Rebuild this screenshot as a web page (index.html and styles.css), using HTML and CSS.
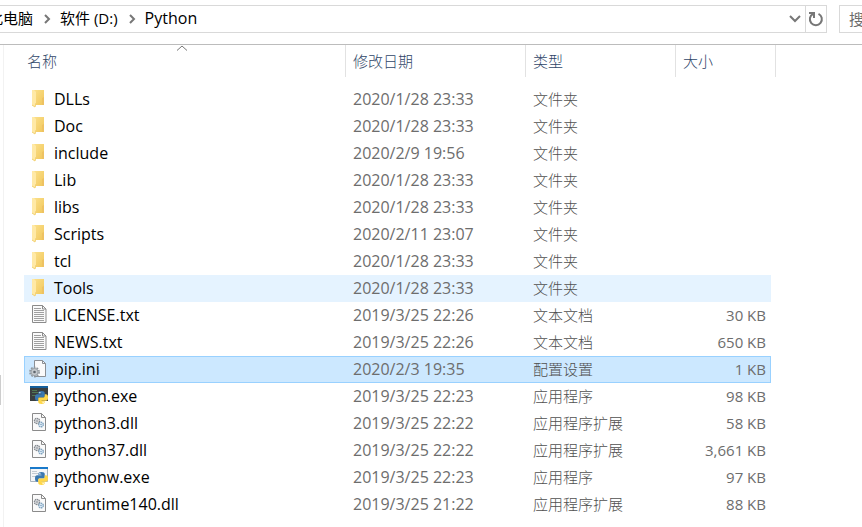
FILE: index.html
```html
<!DOCTYPE html>
<html lang="zh-CN">
<head>
  <meta charset="UTF-8" />
  <meta name="viewport" content="width=device-width, initial-scale=1.0"/>
  <title>Python</title>
  <link rel="stylesheet" href="styles.css">
</head>
<body>
  <svg class="sprite" aria-hidden="true">
    <defs>
      <linearGradient id="gold" x1="0" y1="0" x2="1" y2="1">
        <stop offset="0" stop-color="#fbe08a"/>
        <stop offset="1" stop-color="#f1c75c"/>
      </linearGradient>
    </defs>
    <symbol id="folder" viewBox="0 0 20 21">
      <path d="M6 1h10v15H6z" fill="url(#gold)"/>
      <path d="M14 9l2-1v8h-2z" fill="#eec262"/>
      <path d="M4 1h2l2 2v11l-1 4-3-2z" fill="#ffe9a6"/>
      <path d="M4 16l3 2 1-4" fill="none" stroke="#f3d173"/>
    </symbol>
    <symbol id="sheet" viewBox="0 0 20 21">
      <path d="M4.500 .5h10l3.500 3.500v13.500H4.500z" fill="#fafafa" stroke="#8b8b8b"/>
      <path d="M14.500 .5v3.500H18" fill="none" stroke="#8b8b8b"/>
    </symbol>
    <symbol id="txt" viewBox="0 0 20 21">
      <use href="#sheet"/>
      <path d="M6 3.500h7M6 5.500h10M6 7.500h10M6 9.500h10M6 11.500h10M6 13.500h10M6 15.500h10" stroke="#a0a0a0"/>
    </symbol>
    <symbol id="dll" viewBox="0 0 20 21">
      <path d="M4.500 .5h9l4 4v13h-13z" fill="#fafafa" stroke="#8b8b8b"/>
      <path d="M13.500 .5v4h4" fill="none" stroke="#8b8b8b"/>
      <circle cx="9" cy="8" r="2.500" fill="#eef0f2" stroke="#84898f" stroke-width="1.500" stroke-dasharray="1.400 .5"/>
      <circle cx="9" cy="8" r="1" fill="#9a9fa5"/>
      <circle cx="13" cy="11.500" r="2.300" fill="#e6f1fa" stroke="#7fa3bf" stroke-width="1.400" stroke-dasharray="1.400 .5"/>
      <circle cx="13" cy="11.500" r=".8" fill="#7fa3bf"/>
    </symbol>
    <symbol id="ini" viewBox="0 0 20 21">
      <path d="M6.500 1.500h8l3 3v13h-11z" fill="#fafafa" stroke="#8b8f94"/>
      <path d="M14.500 1.500v3h3" fill="none" stroke="#8b8f94"/>
      <circle cx="6.500" cy="13" r="4.600" fill="none" stroke="#8f969c" stroke-width="1.600" stroke-dasharray="1.800 1.100"/>
      <circle cx="6.500" cy="13" r="3.600" fill="#c3c8cc" stroke="#989ea3"/>
      <circle cx="6.500" cy="13" r="1.300" fill="#5f666c"/>
    </symbol>
    <symbol id="snake" viewBox="0 0 12 12">
      <path d="M3 2Q3 0 6 0t3 2v3Q9 6 8 6H4Q3 6 3 9H2Q0 9 0 6t2-3h4V2.500H3z" fill="#3a78b0"/>
      <path d="M9 10q0 2-3 2t-3-2V7q0-1 1-1h4q1 0 1-3h1q2 0 2 3t-2 3H6v.5h3z" fill="#ffd748"/>
      <circle cx="4.500" cy="1.500" r=".6" fill="#fff"/>
      <circle cx="7.500" cy="10.500" r=".6" fill="#fff"/>
    </symbol>
    <symbol id="exe" viewBox="0 0 20 21">
      <path d="M2 0h18v15H2z" fill="#3b3f40"/>
      <path d="M2 0h18v2H2z" fill="#16609d"/>
      <path d="M4 4.500h5M4 6.500h7M4 9.500h4" stroke="#4f7853"/>
      <use href="#snake" x="7" y="5" width="13" height="13"/>
    </symbol>
    <symbol id="exew" viewBox="0 0 20 21">
      <path d="M2.500 .5h17v14h-17z" fill="#f4f6f8" stroke="#a9b4bd"/>
      <path d="M2 0h18v2H2z" fill="#1979ca"/>
      <path d="M4 4.500h5M4 6.500h6M4 9.500h4" stroke="#c3cbd2"/>
      <use href="#snake" x="7" y="5" width="13" height="13"/>
    </symbol>
  </svg>

  <header class="toolbar">
    <nav class="address">
      <button class="crumb first">此电脑</button>
      <svg class="arrow" viewBox="0 0 8 10"><path d="M2 1l4 4-4 4"/></svg>
      <button class="crumb">软件 (D:)</button>
      <svg class="arrow" viewBox="0 0 8 10"><path d="M2 1l4 4-4 4"/></svg>
      <button class="crumb current">Python</button>
      <button class="tool history" aria-label="历史记录">
        <svg width="12" height="8" viewBox="0 0 12 8"><path d="M1 1l5 5 5-5"/></svg>
      </button>
      <button class="tool refresh" aria-label="刷新">
        <svg width="16" height="16" viewBox="0 0 16 16"><path d="M10.500 2.800a6 6 0 1 1-5.500 .1"/><path d="M1 2h5v5"/></svg>
      </button>
    </nav>
    <input class="search" type="text" placeholder="搜索" aria-label="搜索" />
  </header>

  <div class="content">
    <aside class="sidebar"><div class="thumb"></div></aside>
    <main class="files">
      <table>
        <colgroup>
          <col class="c-name"><col class="c-date"><col class="c-type"><col class="c-size"><col class="c-end">
        </colgroup>
        <thead>
          <tr>
            <th class="sorted">名称<svg class="sort" width="12" height="6" viewBox="0 0 12 6"><path d="M1 5.500l5-4.500 5 4.500"/></svg></th>
            <th>修改日期</th>
            <th>类型</th>
            <th colspan="2">大小</th>
          </tr>
        </thead>
        <tbody>
          <tr><td><svg class="icon"><use href="#folder"/></svg>DLLs</td><td>2020/1/28 23:33</td><td>文件夹</td><td></td></tr>
          <tr><td><svg class="icon"><use href="#folder"/></svg>Doc</td><td>2020/1/28 23:33</td><td>文件夹</td><td></td></tr>
          <tr><td><svg class="icon"><use href="#folder"/></svg>include</td><td>2020/2/9 19:56</td><td>文件夹</td><td></td></tr>
          <tr><td><svg class="icon"><use href="#folder"/></svg>Lib</td><td>2020/1/28 23:33</td><td>文件夹</td><td></td></tr>
          <tr><td><svg class="icon"><use href="#folder"/></svg>libs</td><td>2020/1/28 23:33</td><td>文件夹</td><td></td></tr>
          <tr><td><svg class="icon"><use href="#folder"/></svg>Scripts</td><td>2020/2/11 23:07</td><td>文件夹</td><td></td></tr>
          <tr><td><svg class="icon"><use href="#folder"/></svg>tcl</td><td>2020/1/28 23:33</td><td>文件夹</td><td></td></tr>
          <tr class="hover"><td><svg class="icon"><use href="#folder"/></svg>Tools</td><td>2020/1/28 23:33</td><td>文件夹</td><td></td></tr>
          <tr><td><svg class="icon"><use href="#txt"/></svg>LICENSE.txt</td><td>2019/3/25 22:26</td><td>文本文档</td><td>30 KB</td></tr>
          <tr><td><svg class="icon"><use href="#txt"/></svg>NEWS.txt</td><td>2019/3/25 22:26</td><td>文本文档</td><td>650 KB</td></tr>
          <tr class="selected"><td><svg class="icon"><use href="#ini"/></svg>pip.ini</td><td>2020/2/3 19:35</td><td>配置设置</td><td>1 KB</td></tr>
          <tr><td><svg class="icon"><use href="#exe"/></svg>python.exe</td><td>2019/3/25 22:23</td><td>应用程序</td><td>98 KB</td></tr>
          <tr><td><svg class="icon"><use href="#dll"/></svg>python3.dll</td><td>2019/3/25 22:22</td><td>应用程序扩展</td><td>58 KB</td></tr>
          <tr><td><svg class="icon"><use href="#dll"/></svg>python37.dll</td><td>2019/3/25 22:22</td><td>应用程序扩展</td><td>3,661 KB</td></tr>
          <tr><td><svg class="icon"><use href="#exew"/></svg>pythonw.exe</td><td>2019/3/25 22:23</td><td>应用程序</td><td>97 KB</td></tr>
          <tr><td><svg class="icon"><use href="#dll"/></svg>vcruntime140.dll</td><td>2019/3/25 21:22</td><td>应用程序扩展</td><td>88 KB</td></tr>
        </tbody>
      </table>
    </main>
  </div>
</body>
</html>
```

FILE: styles.css
```css
* {
  box-sizing: border-box;
}
body {
  margin: 0;
  background: #fff;
  color: #000;
  font-family: "Open Sans", "Noto Sans CJK SC", sans-serif;
  font-size: 15px;
  overflow: hidden;
}
button, input {
  font: inherit;
  border: none;
  background: none;
  padding: 0;
  margin: 0;
}
.sprite {
  position: absolute;
  width: 0;
  height: 0;
}
.toolbar {
  display: flex;
  gap: 12px;
  padding-top: 5px;
  height: 45px;
  border-bottom: 1px solid #bcbcbc;
}
.address {
  flex: 1;
  display: flex;
  align-items: center;
  height: 28px;
  border: 1px solid #d9d9d9;
  border-left: none;
}
.crumb {
  white-space: nowrap;
  line-height: 24px;
  padding-bottom: 2px;
}
.crumb.first {
  margin-left: -12px;
}
.crumb.current {
  font-size: 16px;
}
.arrow {
  width: 8px;
  height: 10px;
  margin: 0 9px 0 10px;
  fill: none;
  stroke: #777;
  stroke-width: 2;
}
.tool {
  display: flex;
  align-items: center;
  justify-content: center;
  height: 26px;
  width: 21px;
  flex: none;
}
.tool svg {
  fill: none;
  stroke: #777;
  stroke-width: 2;
}
.history {
  margin-left: auto;
}
.refresh {
  border-left: 1px solid #d9d9d9;
}
.search {
  width: 23px;
  height: 28px;
  padding-left: 9px;
  border: 1px solid #d9d9d9;
  border-right: none;
}
.search::placeholder {
  color: #6d6d6d;
}
.content {
  display: flex;
}
.sidebar {
  width: 4px;
  flex: none;
  border-right: 1px solid #f2f2f2;
  height: calc(100vh - 45px);
  padding-top: 330px;
}
.thumb {
  width: 1px;
  height: 30px;
  background: #cdcdcd;
}
.files {
  flex: 1;
  padding-left: 20px;
}
table {
  table-layout: fixed;
  width: 752px;
  border-collapse: separate;
  border-spacing: 0;
}
.c-name { width: 322px; }
.c-date { width: 180px; }
.c-type { width: 150px; }
.c-size { width: 95px; }
.c-end { width: 5px; }
th {
  position: relative;
  height: 32px;
  padding: 0 7px;
  border-right: 1px solid #e2e2e2;
  color: #2f4668;
  font-weight: 300;
  line-height: 20px;
  text-align: left;
}
th:first-child {
  padding-left: 3px;
}
.sort {
  position: absolute;
  top: 0;
  left: 152px;
  fill: none;
  stroke: #777;
}
tbody::before {
  content: "";
  display: block;
  height: 9px;
}
td {
  height: 27px;
  padding: 0 7px;
  color: #6d6d6d;
  line-height: 27px;
  white-space: nowrap;
}
td:first-child {
  padding-left: 4px;
  color: #000;
  font-size: 16px;
}
td:nth-child(2) {
  font-size: 16px;
}
td:nth-child(3) {
  color: #505050;
  font-weight: 300;
}
td:nth-child(4) {
  padding-right: 5px;
  text-align: right;
}
.icon {
  float: left;
  width: 20px;
  height: 21px;
  margin: 3px 6px 0 0;
}
.hover td {
  background: #e5f3ff;
}
.selected td {
  background: #cce8ff;
  box-shadow: inset 0 1px #99d1ff, inset 0 -1px #99d1ff;
}
.selected td:first-child {
  box-shadow: inset 0 1px #99d1ff, inset 0 -1px #99d1ff, inset 1px 0 #99d1ff;
}
.selected td:last-child {
  box-shadow: inset 0 1px #99d1ff, inset 0 -1px #99d1ff, inset -1px 0 #99d1ff;
}
```
